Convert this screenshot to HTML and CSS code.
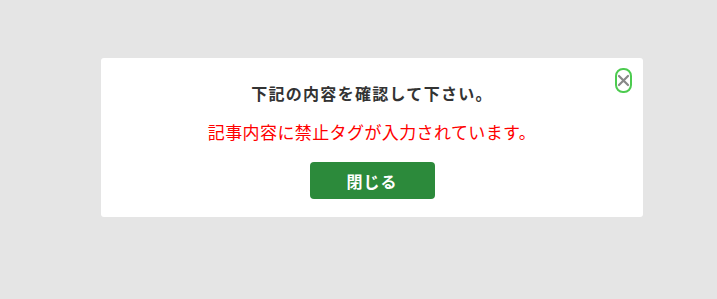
FILE: index.html
```html
<!DOCTYPE html>
<html lang="ja">
<head>
<meta charset="utf-8">
<title>確認</title>
<link rel="stylesheet" href="styles.css">
</head>
<body>
<div class="dialog">
  <button class="close" aria-label="閉じる">
    <svg width="13" height="13" viewBox="0 0 13 13"><path d="M2 2 L11 11 M11 2 L2 11" stroke="#888" stroke-width="2.2" stroke-linecap="round" fill="none"/></svg>
  </button>
  <div class="title">下記の内容を確認して下さい。</div>
  <div class="message">記事内容に禁止タグが入力されています。</div>
  <button class="ok">閉じる</button>
</div>
</body>
</html>
```
FILE: styles.css
```css
html, body {
  margin: 0;
  padding: 0;
  background: #e5e5e5;
  font-family: "Noto Sans CJK JP", "Noto Sans", sans-serif;
}
.dialog {
  position: relative;
  box-sizing: border-box;
  margin: 58px 0 0 101px;
  width: 542px;
  height: 159px;
  background: #fff;
  border-radius: 3px;
  display: flex;
  flex-direction: column;
  align-items: center;
  padding-top: 23px;
}
.title {
  font-size: 16px;
  font-weight: bold;
  color: #333;
  line-height: 24px;
  letter-spacing: 1.3px;
}
.message {
  margin-top: 15px;
  font-size: 17px;
  line-height: 24px;
  color: #ff0000;
  letter-spacing: 0.4px;
}
.ok {
  margin-top: 18px;
  width: 125px;
  height: 37px;
  border: none;
  border-radius: 4px;
  background: #2c8a3b;
  color: #fff;
  font-family: inherit;
  font-size: 16px;
  font-weight: bold;
  letter-spacing: 1px;
  padding: 0;
}
.close {
  position: absolute;
  top: 10px;
  right: 11px;
  width: 17px;
  height: 25px;
  box-sizing: border-box;
  border: 2px solid #4ccb4f;
  border-radius: 8px;
  background: #fff;
  padding: 0;
  display: flex;
  align-items: center;
  justify-content: center;
}
```
